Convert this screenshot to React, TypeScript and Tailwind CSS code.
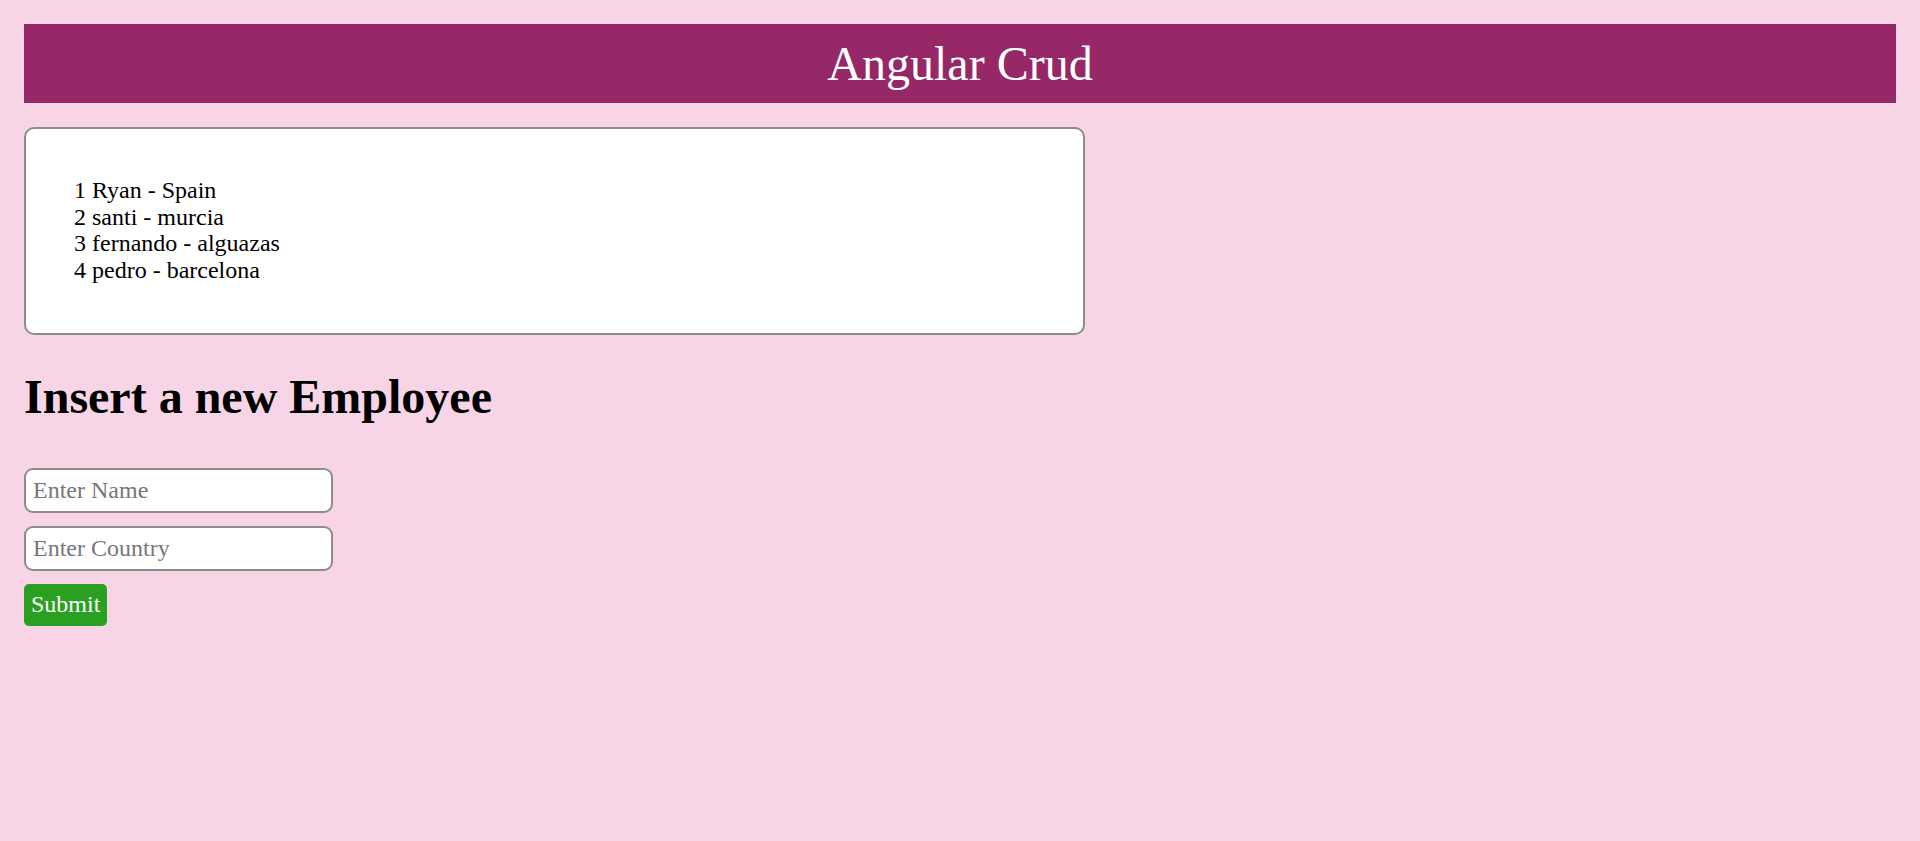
import { useState } from 'react';

type Employee = { id: number; name: string; country: string };

const initial: Employee[] = [
  { id: 1, name: 'Ryan', country: 'Spain' },
  { id: 2, name: 'santi', country: 'murcia' },
  { id: 3, name: 'fernando', country: 'alguazas' },
  { id: 4, name: 'pedro', country: 'barcelona' },
];

export default function App() {
  const [employees, setEmployees] = useState<Employee[]>(initial);
  const [name, setName] = useState('');
  const [country, setCountry] = useState('');

  const handleSubmit = (e: React.FormEvent) => {
    e.preventDefault();
    if (!name || !country) return;
    setEmployees((prev) => [...prev, { id: prev.length + 1, name, country }]);
    setName('');
    setCountry('');
  };

  return (
    <div className="min-h-[841px] bg-[#f7d5e6] p-6 font-['Liberation_Serif','Times_New_Roman',serif] text-[24px] leading-[26.67px] text-black">
      {/* header */}
      <div className="bg-[#962868] py-[13px] text-center">
        <h1 className="text-[48px] leading-[53px] font-normal text-white">Angular Crud</h1>
      </div>

      {/* lista */}
      <div className="mt-6 w-[1061px] rounded-[10px] border-[2.5px] border-[#8c8c8c] bg-white pt-[48px] pb-[49px] pl-[48px]">
        <ul>
          {employees.map((emp) => (
            <li key={emp.id}>
              {emp.id} {emp.name} - {emp.country}
            </li>
          ))}
        </ul>
      </div>

      <h2 className="mt-[35px] text-[48px] leading-[53px] font-bold">Insert a new Employee</h2>

      <form onSubmit={handleSubmit} className="mt-[45px] flex flex-col items-start gap-[13px]">
        <input
          value={name}
          onChange={(e) => setName(e.target.value)}
          placeholder="Enter Name"
          className="h-[45px] w-[309px] rounded-[9px] border-[2.5px] border-[#8c8c8c] bg-white px-[7px] outline-none placeholder:text-[#777]"
        />
        <input
          value={country}
          onChange={(e) => setCountry(e.target.value)}
          placeholder="Enter Country"
          className="h-[45px] w-[309px] rounded-[9px] border-[2.5px] border-[#8c8c8c] bg-white px-[7px] outline-none placeholder:text-[#777]"
        />
        <button
          type="submit"
          className="h-[42px] rounded-[5px] bg-[#29a020] px-[7px] text-white cursor-pointer"
        >
          Submit
        </button>
      </form>
    </div>
  );
}
